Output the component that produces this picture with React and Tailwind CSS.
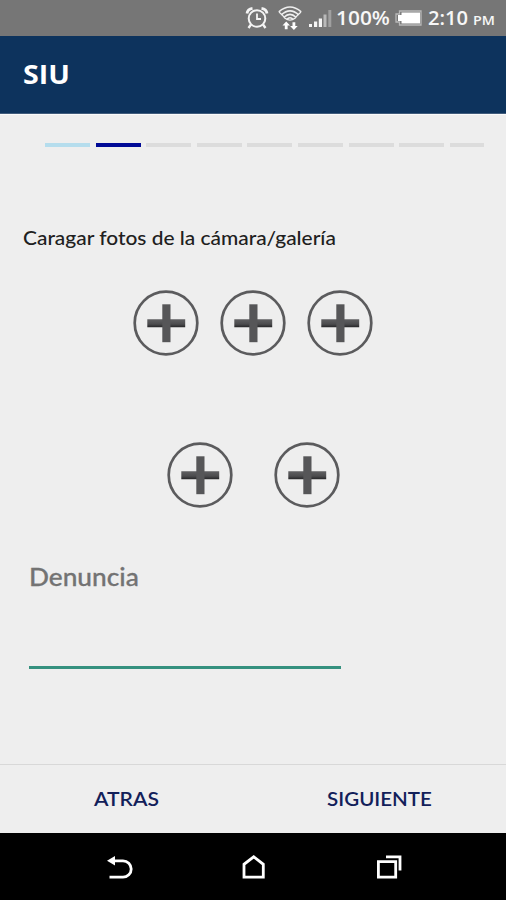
const steps = [
  "w-[45px] bg-[#b5dded]",
  "w-[45px] bg-[#000a96]",
  "w-[45px] bg-[#dcdcdc]",
  "w-[45px] bg-[#dcdcdc]",
  "w-[45px] bg-[#dcdcdc]",
  "w-[45px] bg-[#dcdcdc]",
  "w-[45px] bg-[#dcdcdc]",
  "w-[45px] bg-[#dcdcdc]",
  "w-[34px] bg-[#dcdcdc]",
];

function AlarmIcon() {
  return (
    <svg width="24" height="24" viewBox="0 0 24 24" fill="none" stroke="#f4f4f4" strokeWidth="2">
      <circle cx="12" cy="12.5" r="8.3" />
      <path d="M12 7.5v5.5h4" strokeWidth="1.8" />
      <path d="M2 7.5Q2.500 3 7.500 2.300M22 7.500Q21.500 3 16.500 2.300" strokeWidth="2.800" />
      <path d="M6 18.500l-2.500 3.500M18 18.500l2.500 3.500" strokeWidth="2.400" />
    </svg>
  );
}

function WifiIcon() {
  return (
    <svg width="24" height="26" viewBox="0 0 24 26" fill="none" stroke="#efefef" strokeWidth="1.600">
      <path d="M.8 6.800Q12-2.800 23.200 6.800M3.300 9.800Q12 1.800 20.700 9.800M6 12.300Q12 6.400 18 12.300M8.700 14.500Q12 11 15.300 14.500" />
      <path d="M1 7Q4.500 10 7 13.300Q12 17 17 13.300Q19.500 10 23 7" strokeWidth="1.200" />
      <path d="M8.200 16.200L12 20.300H9.600V24H6.800V20.300H4.500ZM15.900 24.700L12.100 20.700H14.500V17H17.300V20.700H19.700Z" fill="#fff" stroke="none" transform="translate(0 .300)" />
    </svg>
  );
}

function SignalIcon() {
  return (
    <svg width="24" height="18" viewBox="0 0 24 18">
      <path d="M1 14h3v3H1zM6 11.500h3.200V17H6zM10.800 8.500H14V17h-3.200z" fill="#f5f5f5" />
      <path d="M15.500 4.500h3V17h-3z" fill="#b9b9b9" />
      <path d="M20.300 0h3v17h-3z" fill="#a0a0a0" />
    </svg>
  );
}

function BatteryIcon() {
  return (
    <svg width="28" height="16" viewBox="0 0 28 16">
      <path d="M4.500 1H26v14H4.500v-3H1V4h3.500z" fill="none" stroke="#b9b9b9" strokeWidth="1.300" />
      <path d="M6.500 2.500H25v11H6.500v-2.500H3V5h3.500z" fill="#fff" />
    </svg>
  );
}

function AddPhoto() {
  return (
    <button className="block size-[66px]" aria-label="Agregar foto">
      <svg width="66" height="66" viewBox="0 0 66 66">
        <defs>
          <linearGradient id="bar" x1="0" y1="0" x2="0" y2="1">
            <stop offset="0" stopColor="#606062" />
            <stop offset=".600" stopColor="#4c4c4e" />
            <stop offset="1" stopColor="#252527" />
          </linearGradient>
        </defs>
        <circle cx="33" cy="33" r="31.300" fill="none" stroke="#5b5b5d" strokeWidth="2.700" />
        <path d="M14.300 29.300h37.900v8H14.300z" fill="url(#bar)" />
        <path d="M29.300 14.300h8.200v37.900h-8.200z" fill="#565658" />
      </svg>
    </button>
  );
}

export default function App() {
  return (
    <div className="flex h-[900px] w-[506px] flex-col overflow-hidden bg-[#eeeeee] font-['Lato',sans-serif]">
      <div className="flex h-9 shrink-0 items-center bg-[#767676] pl-[245px] font-['Open_Sans',sans-serif] font-semibold text-[#f7f7f7]">
        <AlarmIcon />
        <div className="ml-[9px]"><WifiIcon /></div>
        <div className="ml-[6px] mt-[2px]"><SignalIcon /></div>
        <span className="ml-[4px] w-[55px] origin-left scale-x-[1.1] text-[19px] leading-9 whitespace-nowrap">100%</span>
        <div className="ml-[4px]"><BatteryIcon /></div>
        <span className="ml-[5px] w-[41px] origin-left scale-x-[1.06] text-[19px] leading-9 whitespace-nowrap">2:10</span>
        <span className="ml-[4px] mt-[4px] origin-left scale-x-[1.1] text-[13px] leading-8">PM</span>
      </div>

      <header className="flex h-[78px] shrink-0 items-center border-b border-[#415c7c] bg-[#0d335d] pl-[23px]">
        <h1 className="origin-left scale-x-[1.06] font-['Open_Sans',sans-serif] text-[27px] font-bold text-white">SIU</h1>
      </header>

      <main className="flex h-[650px] shrink-0 flex-col border-t border-[#fafafa]">
        <div className="mt-[28px] ml-[45px] flex h-[3.500px] gap-[5.600px]">
          {steps.map((s, i) => (
            <div key={i} className={`shrink-0 ${s}`} />
          ))}
        </div>

        <p className="mt-[79.500px] ml-[23px] h-6 w-[277px] origin-left scale-x-[1.13] text-[18.500px] leading-6 font-medium whitespace-nowrap text-[#202020]">
          Caragar fotos de la cámara/galería
        </p>

        <div className="mt-[40px] flex justify-center gap-[21px]">
          <AddPhoto />
          <AddPhoto />
          <AddPhoto />
        </div>
        <div className="mt-[86px] flex justify-center gap-[41px]">
          <AddPhoto />
          <AddPhoto />
        </div>

        <div className="mt-[50px] ml-[29px] h-[111px] w-[312px] border-b-[3px] border-[#35917f]">
          <label className="block origin-left scale-x-[1.05] text-[25px] leading-[36px] font-medium text-[#737373] [-webkit-text-stroke:0.3px_#737373]">Denuncia</label>
        </div>
      </main>

      <footer className="grid h-[69px] shrink-0 grid-cols-2 items-center border-t border-[#d8d8d8] text-[19px] font-semibold text-[#12205a]">
        <button className="scale-x-[1.11] text-center">ATRAS</button>
        <button className="scale-x-[1.08] text-center">SIGUIENTE</button>
      </footer>

      <nav className="flex h-[67px] shrink-0 items-center bg-black pl-[106px]">
        <svg width="28" height="26" viewBox="0 0 28 26" fill="none" stroke="#fff" strokeWidth="2.800">
          <path d="M6 6.800h11a8.200 8.200 0 0 1 0 16.400H3.500" />
          <path d="M1 6.800L9 2v9.600z" fill="#fff" stroke="none" />
        </svg>
        <svg className="ml-[107px]" width="26" height="26" viewBox="0 0 26 26" fill="none" stroke="#fff" strokeWidth="2.800">
          <path d="M3 23.200V10.300L12.700 2.800l9.600 7.500v12.900z" />
        </svg>
        <svg className="ml-[108px]" width="28" height="26" viewBox="0 0 28 26" fill="none" stroke="#fff" strokeWidth="2.800">
          <path d="M3.400 7.700h17.300v15.500H3.400zM11 2.900h14V16.500" />
        </svg>
      </nav>
    </div>
  );
}
